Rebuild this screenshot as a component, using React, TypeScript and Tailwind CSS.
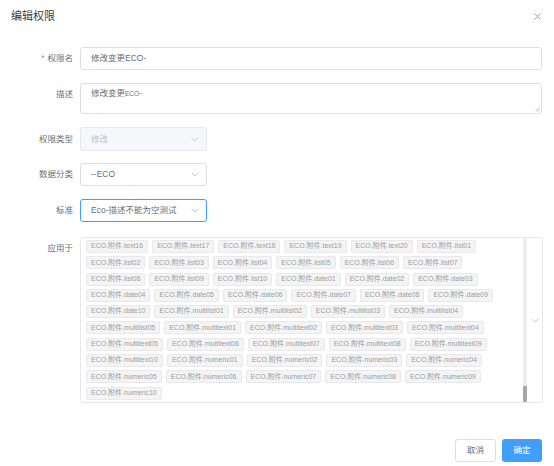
import React from "react";

const FONT = { fontFamily: '"Liberation Sans", "Noto Sans CJK SC", sans-serif' };

const tags: string[] = [
  "text16", "text17", "text18", "text19", "text20",
  "list01", "list02", "list03", "list04", "list05", "list06", "list07", "list08", "list09", "list10",
  "date01", "date02", "date03", "date04", "date05", "date06", "date07", "date08", "date09", "date10",
  "multilist01", "multilist02", "multilist03", "multilist04", "multilist05",
  "multitext01", "multitext02", "multitext03", "multitext04", "multitext05", "multitext06", "multitext07", "multitext08", "multitext09", "multitext10",
  "numeric01", "numeric02", "numeric03", "numeric04", "numeric05", "numeric06", "numeric07", "numeric08", "numeric09", "numeric10",
];

function Chevron({ color = "#c0c4cc" }: { color?: string }) {
  return (
    <svg width="8" height="5" viewBox="0 0 8 5" fill="none">
      <polyline points="0.7,0.7 4,4 7.3,0.7" stroke={color} strokeWidth="0.9" />
    </svg>
  );
}

function Label({ text, required, h = "h-[23px]" }: { text: string; required?: boolean; h?: string }) {
  return (
    <div className={`w-[80px] shrink-0 pr-[7px] flex items-center justify-end text-[8.5px] text-[#6b6e73] ${h}`}>
      {required && <span className="text-[#f56c6c] mr-[3px]">*</span>}
      {text}
    </div>
  );
}

function Select({ value, disabled, focused }: { value: string; disabled?: boolean; focused?: boolean }) {
  const base = "w-[127px] flex items-center justify-between pl-[10px] pr-[7px] rounded-[3px] border text-[8.5px]";
  const cls = disabled
    ? `${base} h-[24px] bg-[#f5f7fa] border-[#e4e7ed] text-[#c0c4cc]`
    : focused
    ? `${base} h-[23px] bg-white border-[#409eff] text-[#6b6e73]`
    : `${base} h-[23px] bg-white border-[#dcdfe6] text-[#6b6e73]`;
  return (
    <div className={cls}>
      <span>{value}</span>
      <Chevron />
    </div>
  );
}

export default function App() {
  return (
    <div className="w-[554px] h-[466px] bg-white flex flex-col" style={FONT}>
      <div className="h-[32px] flex items-center justify-between pl-[11px] pr-[13px]">
        <span className="text-[11px] text-[#3a3c40]">编辑权限</span>
        <svg width="7" height="7" viewBox="0 0 7 7">
          <path d="M0.5 0.5 L6.5 6.5 M6.5 0.5 L0.5 6.5" stroke="#909399" strokeWidth="0.9" />
        </svg>
      </div>

      <div className="mt-[15px] flex flex-col">
        <div className="flex">
          <Label text="权限名" required />
          <div className="w-[462px] h-[23px] border border-[#dcdfe6] rounded-[3px] flex items-center pl-[10px] text-[8.5px] text-[#6b6e73]">
            修改变更ECO-
          </div>
        </div>

        <div className="flex mt-[13px]">
          <Label text="描述" />
          <div className="relative w-[462px] h-[31px] border border-[#dcdfe6] rounded-[3px] pl-[10px] pt-[3px] text-[8.5px] leading-[12px] text-[#6b6e73]">
            修改变更<span className="text-[6.5px]">ECO−</span>
            <svg className="absolute right-[1px] bottom-[1px]" width="5" height="5" viewBox="0 0 5 5">
              <path d="M4.5 0.5 L0.5 4.5 M4.5 2.5 L2.5 4.5" stroke="#999" strokeWidth="0.6" />
            </svg>
          </div>
        </div>

        <div className="flex mt-[13px]">
          <Label text="权限类型" h="h-[24px]" />
          <Select value="修改" disabled />
        </div>

        <div className="flex mt-[12px]">
          <Label text="数据分类" />
          <Select value="--ECO" />
        </div>

        <div className="flex mt-[13px]">
          <Label text="标准" />
          <Select value="Eco-描述不能为空测试" focused />
        </div>

        <div className="flex mt-[15px]">
          <Label text="应用于" />
          <div className="w-[463px] h-[166px] border border-[#e4e7ed] rounded-[3px] flex">
            <div className="flex-1 pl-[5px] pr-[5px] pt-[2px] flex flex-wrap content-start gap-x-[4px] gap-y-[3.3px]">
              {tags.map((t) => (
                <span
                  key={t}
                  className="h-[13px] px-[4px] flex items-center rounded-[2px] bg-[#f4f4f5] border border-[#e9e9eb] text-[7px] text-[#9a9da2] whitespace-nowrap"
                >
                  ECO.附件.{t}
                </span>
              ))}
            </div>
            <div className="w-[4px] bg-[#ececec] flex flex-col justify-end">
              <div className="h-[16px] bg-[#a8a8a8] rounded-[1px]" />
            </div>
            <div className="w-[15px] flex items-center justify-center">
              <Chevron />
            </div>
          </div>
        </div>
      </div>

      <div className="mt-[36px] flex justify-end gap-[6px] pr-[12px]">
        <div className="w-[41px] h-[23px] border border-[#dcdfe6] rounded-[3px] flex items-center justify-center text-[8.5px] text-[#6b6e73]">
          取消
        </div>
        <div className="w-[40px] h-[23px] bg-[#409eff] rounded-[3px] flex items-center justify-center text-[8.5px] text-white">
          确定
        </div>
      </div>
    </div>
  );
}
